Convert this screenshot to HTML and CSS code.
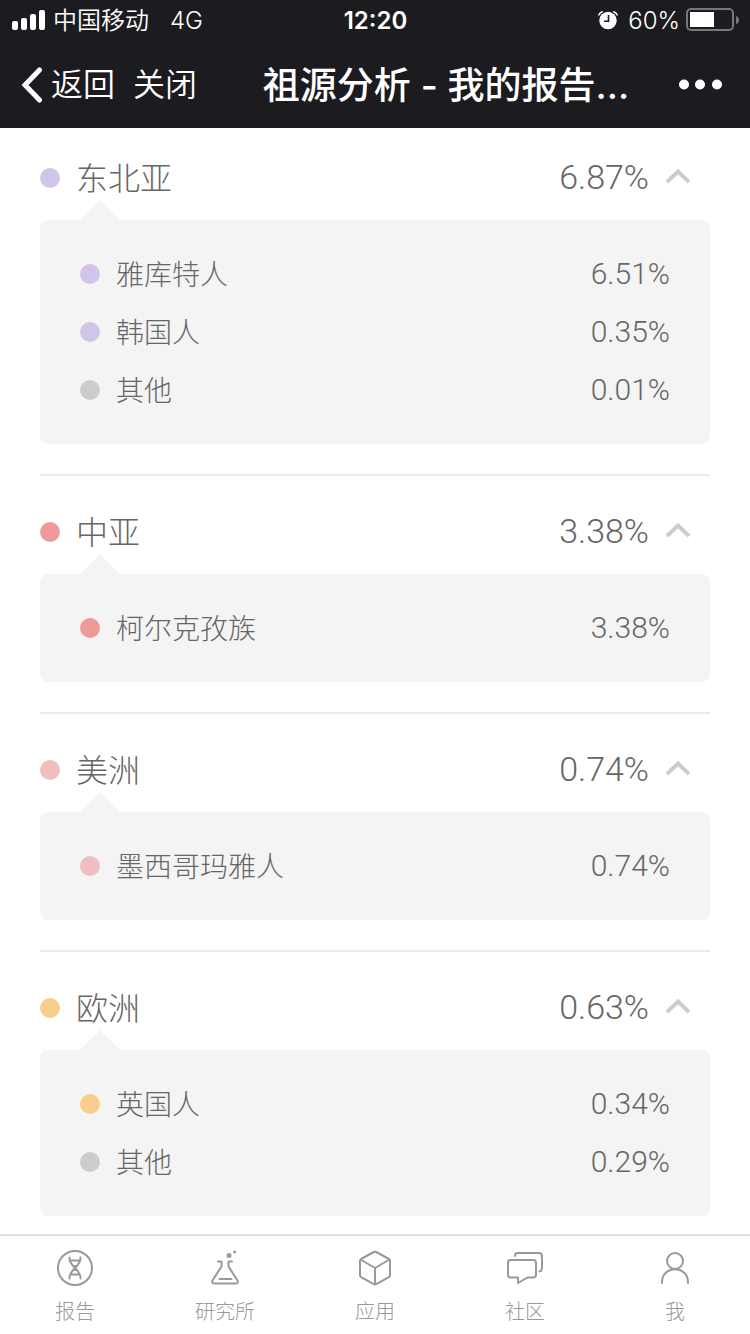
FILE: index.html
```html
<!DOCTYPE html>
<html lang="zh-CN">
<head>
<meta charset="utf-8">
<meta name="viewport" content="width=device-width, initial-scale=1">
<title>祖源分析 - 我的报告</title>
<link rel="stylesheet" href="styles.css">
</head>
<body>
<header class="top">
  <div class="status">
    <div class="status-side">
      <svg class="signal" width="34" height="20" viewBox="0 0 34 20" fill="#fff" aria-hidden="true"><rect x="0" y="11" width="6" height="9" rx="2"/><rect x="9" y="8" width="6" height="12" rx="2"/><rect x="18" y="4" width="6" height="16" rx="2"/><rect x="27" y="0" width="6" height="20" rx="2"/></svg>
      <span class="carrier">中国移动</span>
      <span class="network">4G</span>
    </div>
    <time class="clock">12:20</time>
    <div class="status-side status-right">
      <svg class="alarm" width="20" height="20" viewBox="0 0 20 20" aria-hidden="true"><circle cx="10" cy="10.500" r="8.700" fill="#fff"/><path d="M0 5.500Q1 1.500 4.500 1L5.200 2Q2.500 3.300 1 5.700zM20 5.500Q19 1.500 15.500 1L14.800 2Q17.500 3.300 19 5.700z" fill="#fff"/><path d="M10.500 5V11.200H6" fill="none" stroke="#1c1b20" stroke-width="1.600"/></svg>
      <span class="charge">60%</span>
      <svg class="battery" width="53" height="24" viewBox="0 0 53 24" aria-hidden="true"><rect x="1" y="1" width="46" height="21" rx="4" fill="none" stroke="#77767a" stroke-width="2"/><rect x="4" y="4" width="24" height="15" fill="#fff"/><path d="M50 8q3 1 3 4t-3 4z" fill="#77767a"/></svg>
    </div>
  </div>
  <div class="navbar">
    <div class="nav-left">
      <button class="nav-button" type="button"><svg width="22" height="36" viewBox="0 0 22 36" fill="none" stroke="#fff" stroke-width="5" stroke-linecap="round" stroke-linejoin="miter" aria-hidden="true"><path d="M18.500 3L4 18L18.500 33"/></svg><span class="back-label">返回</span></button>
      <button class="nav-button" type="button">关闭</button>
    </div>
    <h1 class="title">祖源分析 - 我的报告...</h1>
    <button class="more" type="button" aria-label="更多"><svg width="44" height="12" viewBox="0 0 44 12" fill="#fff" aria-hidden="true"><circle cx="5" cy="5.500" r="5"/><circle cx="21" cy="5.500" r="5"/><circle cx="38" cy="5.500" r="5"/></svg></button>
  </div>
</header>

<main class="content">
  <section class="region">
    <button class="region-head" type="button" aria-expanded="true"><span class="dot lilac"></span><span class="name">东北亚</span><span class="value">6.87%</span><svg class="chevron" width="26" height="18" viewBox="0 0 26 18" aria-hidden="true"><path d="M2 13L13 2.500L24 13"/></svg></button>
    <ul class="card">
      <li class="row"><span class="dot lilac"></span><span class="name">雅库特人</span><span class="value">6.51%</span></li>
      <li class="row"><span class="dot lilac"></span><span class="name">韩国人</span><span class="value">0.35%</span></li>
      <li class="row"><span class="dot grey"></span><span class="name">其他</span><span class="value">0.01%</span></li>
    </ul>
  </section>
  <section class="region">
    <button class="region-head" type="button" aria-expanded="true"><span class="dot red"></span><span class="name">中亚</span><span class="value">3.38%</span><svg class="chevron" width="26" height="18" viewBox="0 0 26 18" aria-hidden="true"><path d="M2 13L13 2.500L24 13"/></svg></button>
    <ul class="card">
      <li class="row"><span class="dot red"></span><span class="name">柯尔克孜族</span><span class="value">3.38%</span></li>
    </ul>
  </section>
  <section class="region">
    <button class="region-head" type="button" aria-expanded="true"><span class="dot pink"></span><span class="name">美洲</span><span class="value">0.74%</span><svg class="chevron" width="26" height="18" viewBox="0 0 26 18" aria-hidden="true"><path d="M2 13L13 2.500L24 13"/></svg></button>
    <ul class="card">
      <li class="row"><span class="dot pink"></span><span class="name">墨西哥玛雅人</span><span class="value">0.74%</span></li>
    </ul>
  </section>
  <section class="region">
    <button class="region-head" type="button" aria-expanded="true"><span class="dot amber"></span><span class="name">欧洲</span><span class="value">0.63%</span><svg class="chevron" width="26" height="18" viewBox="0 0 26 18" aria-hidden="true"><path d="M2 13L13 2.500L24 13"/></svg></button>
    <ul class="card">
      <li class="row"><span class="dot amber"></span><span class="name">英国人</span><span class="value">0.34%</span></li>
      <li class="row"><span class="dot grey"></span><span class="name">其他</span><span class="value">0.29%</span></li>
    </ul>
  </section>
</main>

<nav class="tabs">
  <a class="tab" href="#report"><svg class="tab-icon" width="40" height="40" viewBox="0 0 40 40" aria-hidden="true"><circle cx="20" cy="20" r="17"/><path d="M14.500 9.500Q14 14 20 20T25.500 30.500M25.500 9.500Q26 14 20 20T14.500 30.500M15.500 12.500h9M15.500 26.500h9M18 18h4M18 22h4"/></svg>报告</a>
  <a class="tab" href="#lab"><svg class="tab-icon" width="40" height="40" viewBox="0 0 40 40" aria-hidden="true"><path d="M13 13.500h3.500v5L7.800 32q-1.800 3.500 1.700 3.500h21q3.500 0 1.700-3.500L23.500 18.500v-5H27M14.500 31h12"/><circle class="solid" cx="24" cy="7.500" r="2.500"/><circle class="solid" cx="29.500" cy="4" r="1.500"/></svg>研究所</a>
  <a class="tab" href="#apps"><svg class="tab-icon" width="40" height="40" viewBox="0 0 40 40" aria-hidden="true"><path d="M18.800 4L6 11q-1 .6-1 1.800v14.500q0 1.200 1 1.800l12.800 7q1.200.6 2.400 0l12.800-7q1-.6 1-1.800V12.800q0-1.200-1-1.800L21.200 4q-1.200-.6-2.400 0zM5.500 11.500L20 20l14.500-8.500M20 20v16.500"/></svg>应用</a>
  <a class="tab" href="#community"><svg class="tab-icon" width="40" height="40" viewBox="0 0 40 40" aria-hidden="true"><path d="M5.500 12h22.500q3 0 3 3v11.500q0 3-3 3H22.500L13 35v-5.500H5.500q-2.500 0-2.500-2.500V14.500q0-2.500 2.500-2.500zM10 8V7.500q0-2.500 2.500-2.500H34q3 0 3 3v12q0 3-2.500 3.500"/></svg>社区</a>
  <a class="tab" href="#me"><svg class="tab-icon" width="40" height="40" viewBox="0 0 40 40" aria-hidden="true"><circle cx="20" cy="13" r="8"/><path d="M7 35v-1c0-17 26-17 26 0v1"/></svg>我</a>
</nav>
</body>
</html>
```
FILE: styles.css
```css
* {
  box-sizing: border-box;
}

body {
  margin: 0;
  min-height: 100vh;
  display: flex;
  flex-direction: column;
  background: #fff;
  color: #666;
  font-family: Roboto, "Noto Sans CJK SC", sans-serif;
  font-weight: 300;
}

button {
  margin: 0;
  padding: 0;
  border: 0;
  background: none;
  color: inherit;
  font: inherit;
}

svg {
  display: block;
  flex: none;
}

.top {
  background: #1c1b20;
  color: #fff;
}

.status {
  display: grid;
  grid-template-columns: 1fr auto 1fr;
  align-items: center;
  height: 42px;
  padding: 0 11px 0 12px;
  font-family: Inter, "Noto Sans CJK SC", sans-serif;
  font-size: 24px;
  line-height: 42px;
}

.status-side {
  display: flex;
  align-items: center;
}

.signal,
.alarm,
.battery {
  margin-bottom: 2px;
}

.carrier {
  margin-left: 7px;
  font-weight: 350;
}

.network {
  margin-left: 21px;
}

.clock {
  font-weight: 600;
}

.status-right {
  justify-content: flex-end;
}

.charge {
  margin: 0 6px 0 10px;
}

.navbar {
  display: flex;
  align-items: center;
  justify-content: space-between;
  height: 86px;
  padding: 0 27px 0 21px;
}

.nav-left {
  display: flex;
  align-items: center;
  gap: 18px;
}

.nav-button {
  display: flex;
  align-items: center;
  gap: 8px;
  font-size: 32px;
  font-weight: 350;
  line-height: 40px;
  white-space: nowrap;
}

.title {
  margin: 0;
  padding: 2px 0 0 16px;
  font-family: Inter, "Noto Sans CJK SC", sans-serif;
  font-size: 37px;
  font-weight: 500;
  line-height: 48px;
  white-space: nowrap;
}

.content {
  flex: 1;
  padding: 0 40px 18px;
}

.region + .region {
  margin-top: 30px;
  padding-top: 6px;
  border-top: 2px solid #ebebeb;
}

.region-head {
  display: flex;
  align-items: center;
  width: 100%;
  height: 92px;
  padding: 7px 19px 0 0;
  font-size: 32px;
  text-align: left;
}

.name {
  flex: 1;
  margin-left: 16px;
  padding-bottom: 2px;
}

.region-head .name {
  padding-bottom: 4px;
}

.value {
  padding-bottom: 1px;
}

.chevron {
  margin-left: 16px;
  fill: none;
  stroke: #ccc;
  stroke-width: 4;
}

.region-head .value {
  font-size: 34px;
}

.card {
  position: relative;
  margin: 0;
  padding: 25px 40px;
  border-radius: 8px;
  background: #f4f4f4;
  list-style: none;
}

.card::before {
  content: "";
  position: absolute;
  left: 40px;
  bottom: 100%;
  border: solid transparent;
  border-width: 0 20px 20px;
  border-bottom-color: #f4f4f4;
}

.row {
  display: flex;
  align-items: center;
  height: 58px;
  font-size: 28px;
}

.row .value {
  font-size: 30px;
}

.dot {
  flex: none;
  width: 20px;
  height: 20px;
  border-radius: 50%;
}

.lilac {
  background: #d1c4e9;
}

.grey {
  background: #ccc;
}

.red {
  background: #ef9a9a;
}

.pink {
  background: #efbfbf;
}

.amber {
  background: #f8cf8a;
}

.tabs {
  display: grid;
  grid-template-columns: repeat(5, 1fr);
  height: 100px;
  border-top: 2px solid #dfe3e8;
}

.tab {
  display: flex;
  flex-direction: column;
  align-items: center;
  gap: 8px;
  padding-top: 12px;
  color: #999;
  font-size: 20px;
  line-height: 32px;
  text-decoration: none;
}

.tab-icon {
  fill: none;
  stroke: #999;
  stroke-width: 2;
  stroke-linejoin: round;
  stroke-linecap: round;
}

.solid {
  fill: #999;
  stroke: none;
}
```
